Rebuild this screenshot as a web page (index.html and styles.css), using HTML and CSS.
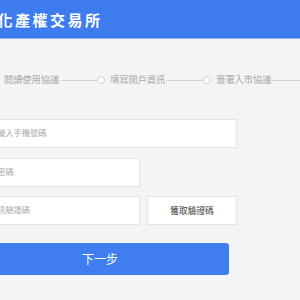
FILE: index.html
```html
<!DOCTYPE html>
<html lang="zh-Hant">
<head>
  <meta charset="UTF-8">
  <meta name="viewport" content="width=device-width, initial-scale=1.0">
  <title>開戶</title>
  <link rel="stylesheet" href="styles.css">
</head>
<body>
  <header class="header">
    <h1 class="title">文化產權交易所</h1>
  </header>

  <!-- 開戶步驟 -->
  <div class="steps">
    <div class="step"><span class="dot"></span><span class="label">閱讀使用協議</span><span class="line"></span></div>
    <div class="step"><span class="dot"></span><span class="label">填寫開戶資訊</span><span class="line"></span></div>
    <div class="step"><span class="dot"></span><span class="label">簽署入市協議</span><span class="line"></span></div>
  </div>

  <form class="form">
    <input class="field wide" type="text" placeholder="請輸入手機號碼">
    <input class="field half" type="password" placeholder="新密碼">
    <div class="row">
      <input class="field half" type="text" placeholder="簡訊驗證碼">
      <button class="code-btn" type="button">獲取驗證碼</button>
    </div>
    <button class="next" type="button">下一步</button>
  </form>
</body>
</html>
```

FILE: styles.css
```css
body {
  margin: 0;
  background-color: #f3f4f6;
  font-family: "Liberation Sans", "Noto Sans CJK TC", sans-serif;
  overflow: hidden;
}
.header {
  height: 38px;
  background-color: #3d7cef;
  border-bottom: 1px solid #93b6f7;
  display: flex;
  align-items: center;
}
.title {
  margin: 0 0 0 -20px;
  color: #fff;
  font-size: 15px;
  font-weight: bold;
  letter-spacing: 2.5px;
  white-space: nowrap;
}
.steps {
  display: flex;
  align-items: center;
  height: 12px;
  margin: 35px 0 0 -9px;
  white-space: nowrap;
}
.step {
  display: flex;
  align-items: center;
  flex: none;
}
.dot {
  width: 8px;
  height: 8px;
  box-sizing: border-box;
  border: 1px solid #d2d2d2;
  border-radius: 50%;
  background-color: #fff;
  margin-right: 5px;
}
.label {
  font-size: 9.2px;
  line-height: 12px;
  color: #a8a8a8;
}
.line {
  width: 37px;
  height: 1px;
  background-color: #d4d4d4;
  margin-left: 1px;
}
.form {
  display: flex;
  flex-direction: column;
  gap: 9.5px;
  margin: 33px 0 0 -22px;
}
.row {
  display: flex;
  gap: 7px;
}
.field {
  height: 29px;
  box-sizing: border-box;
  border: 1px solid #e2e3e5;
  background-color: #fff;
  padding: 0 10px;
  font-family: inherit;
  font-size: 8.2px;
  outline: none;
}
.field::placeholder {
  color: #a9a9a9;
}
.wide {
  width: 259px;
}
.half {
  width: 162px;
}
.code-btn {
  width: 90px;
  height: 29px;
  box-sizing: border-box;
  border: 1px solid #e2e3e5;
  background-color: #fff;
  color: #3a3a3a;
  font-family: inherit;
  font-size: 8.7px;
  padding: 0;
}
.next {
  width: 258px;
  height: 32px;
  margin: 8px 0 0 -7px;
  border: none;
  border-radius: 3px;
  background-color: #3f7ef0;
  color: #fff;
  font-family: inherit;
  font-size: 12px;
  padding: 0;
}
```
